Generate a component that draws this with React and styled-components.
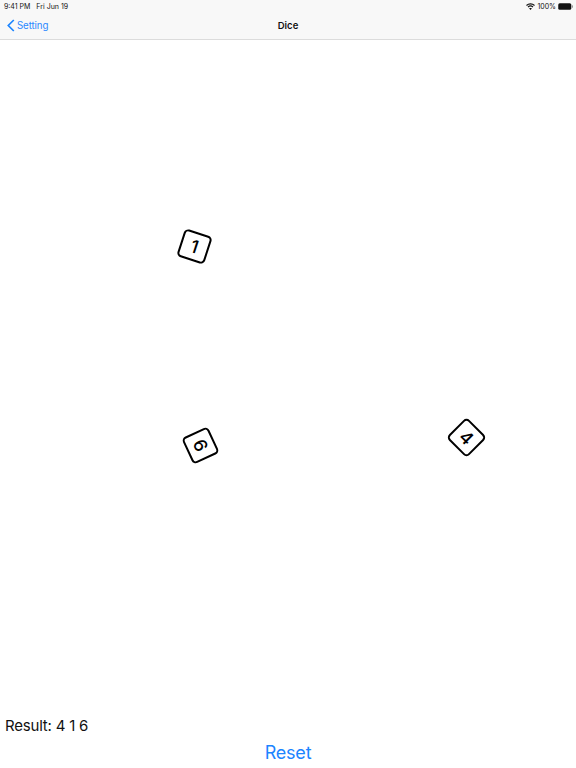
import React from "react";
import styled, { createGlobalStyle } from "styled-components";

const GlobalStyle = createGlobalStyle`
  html, body {
    margin: 0;
    padding: 0;
    background: #fff;
    font-family: Inter, "Liberation Sans", sans-serif;
  }
`;

const Screen = styled.div`
  width: 576px;
  height: 768px;
  display: flex;
  flex-direction: column;
  overflow: hidden;
`;

const Header = styled.header`
  height: 40px;
  flex: none;
  display: flex;
  flex-direction: column;
  background: #f8f8f8;
  border-bottom: 1px solid #dcdcdc;
  box-sizing: border-box;
`;

const StatusBar = styled.div`
  height: 12px;
  padding: 0 3px 0 4px;
  display: flex;
  align-items: center;
  justify-content: space-between;
  font-size: 7px;
  color: #111;
`;

const StatusGroup = styled.div`
  display: flex;
  align-items: center;
  gap: ${(props) => props.$gap || 2}px;
`;

const NavBar = styled.div`
  flex: 1;
  display: grid;
  grid-template-columns: 1fr auto 1fr;
  align-items: center;
  padding-bottom: 1px;
`;

const BackLink = styled.div`
  display: flex;
  align-items: center;
  gap: 2px;
  padding-left: 7px;
  color: #2a88ff;
  font-size: 9.7px;
  letter-spacing: -0.1px;
`;

const Title = styled.div`
  font-size: 9.5px;
  font-weight: 600;
  color: #111;
`;

const Board = styled.main`
  flex: 1;
  position: relative;
`;

const Die = styled.div`
  position: absolute;
  left: ${(props) => props.$x - 14.5}px;
  top: ${(props) => props.$y - 54.5}px;
  width: 29px;
  height: 29px;
  box-sizing: border-box;
  display: flex;
  align-items: center;
  justify-content: center;
  border: 2.6px solid #000;
  border-radius: 4.5px;
  font-size: 18px;
  font-weight: 500;
  color: #000;
  background: #fff;
  transform: rotate(${(props) => props.$angle}deg);
`;

const Footer = styled.footer`
  flex: none;
  display: flex;
  flex-direction: column;
`;

const Result = styled.div`
  padding-left: 5px;
  font-size: 15px;
  letter-spacing: -0.2px;
  line-height: 20px;
  color: #111;
`;

const ResetButton = styled.button`
  height: 32px;
  padding: 1px 0 0;
  border: none;
  background: none;
  color: #1c84ff;
  font-family: inherit;
  font-size: 18px;
  letter-spacing: -0.2px;
`;

const WifiIcon = () => (
  <svg width="9" height="7" viewBox="0 0 18 14" fill="none" stroke="#111" strokeWidth="2.200">
    <path d="M1 5 C5.500 0.600 12.500 0.600 17 5" />
    <path d="M4 8 C6.800 5.500 11.200 5.500 14 8" />
    <path d="M9 13.800 L6.300 10.900 C7.800 9.700 10.200 9.700 11.700 10.900 Z" fill="#111" stroke="none" />
  </svg>
);

const BatteryIcon = () => (
  <svg width="15" height="7" viewBox="0 0 30 14">
    <rect x="0.5" y="0.5" width="26" height="13" rx="3" fill="#111" />
    <rect x="27.500" y="4.500" width="2" height="5" rx="1" fill="#777" />
  </svg>
);

const dice = [
  { value: 1, x: 194, y: 246.500, angle: 18 },
  { value: 6, x: 200.500, y: 445, angle: 65 },
  { value: 4, x: 466.500, y: 437.500, angle: 45 },
];

export default function App() {
  return (
    <Screen>
      <GlobalStyle />
      <Header>
        <StatusBar>
          <StatusGroup $gap={6}>
            <span>9:41 PM</span>
            <span>Fri Jun 19</span>
          </StatusGroup>
          <StatusGroup>
            <WifiIcon />
            <span>100%</span>
            <BatteryIcon />
          </StatusGroup>
        </StatusBar>
        <NavBar>
          <BackLink>
            <svg width="8" height="13" viewBox="0 0 8 13">
              <path d="M6.800 1 L1.300 6.500 L6.800 12" fill="none" stroke="#1c84ff" strokeWidth="1.700" />
            </svg>
            Setting
          </BackLink>
          <Title>Dice</Title>
          <span />
        </NavBar>
      </Header>
      <Board>
        {dice.map((die) => (
          <Die key={die.value} $x={die.x} $y={die.y} $angle={die.angle}>
            {die.value}
          </Die>
        ))}
      </Board>
      <Footer>
        <Result>Result: 4 1 6</Result>
        <ResetButton>Reset</ResetButton>
      </Footer>
    </Screen>
  );
}
